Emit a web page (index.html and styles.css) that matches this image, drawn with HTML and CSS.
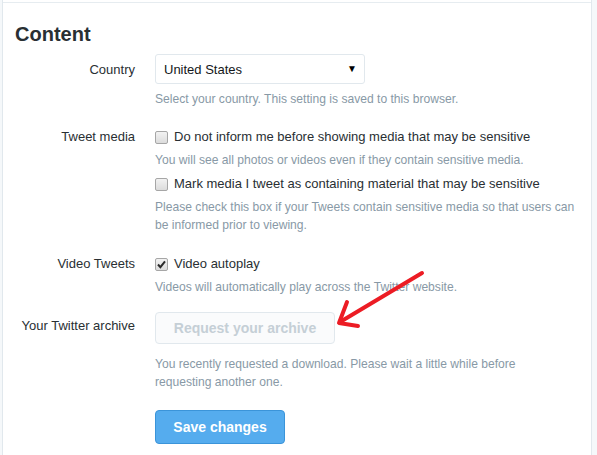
FILE: index.html
```html
<!DOCTYPE html>
<html>
<head>
<meta charset="utf-8">
<link rel="stylesheet" href="styles.css">
</head>
<body>
<div class="card">
  <div class="topline"></div>
  <h2 class="title">Content</h2>
  <div class="form">
    <div class="row row-country">
      <div class="label label-select">Country</div>
      <div class="field">
        <div class="select-wrap">
          <span class="select-text">United States</span>
          <span class="select-arrow">▼</span>
        </div>
        <p class="help help-select">Select your country. This setting is saved to this browser.</p>
      </div>
    </div>
    <div class="row row-media">
      <div class="label">Tweet media</div>
      <div class="field">
        <label class="check"><span class="box"></span>Do not inform me before showing media that may be sensitive</label>
        <p class="help">You will see all photos or videos even if they contain sensitive media.</p>
        <label class="check check-second"><span class="box"></span>Mark media I tweet as containing material that may be sensitive</label>
        <p class="help">Please check this box if your Tweets contain sensitive media so that users can be informed prior to viewing.</p>
      </div>
    </div>
    <div class="row row-video">
      <div class="label">Video Tweets</div>
      <div class="field">
        <label class="check"><span class="box checked"><svg viewBox="0 0 13 13" width="13" height="13"><path d="M3 6.5 L5.4 9.2 L10 3.4" fill="none" stroke="#2a2a2a" stroke-width="2"/></svg></span>Video autoplay</label>
        <p class="help">Videos will automatically play across the Twitter website.</p>
      </div>
    </div>
    <div class="row row-archive">
      <div class="label label-btn">Your Twitter archive</div>
      <div class="field">
        <button class="btn-disabled" type="button">Request your archive</button>
        <p class="help help-archive">You recently requested a download. Please wait a little while before requesting another one.</p>
      </div>
    </div>
    <div class="row row-save">
      <div class="label"></div>
      <div class="field">
        <button class="btn-primary" type="button">Save changes</button>
      </div>
    </div>
  </div>
  <svg class="arrow" viewBox="0 0 597 455" width="597" height="455">
    <path d="M422 273 L340 322" fill="none" stroke="#ec1c24" stroke-width="4" stroke-linecap="round"/>
    <path d="M347 302 L339 323 L358 326" fill="none" stroke="#ec1c24" stroke-width="4" stroke-linecap="round" stroke-linejoin="round"/>
  </svg>
</div>
</body>
</html>
```
FILE: styles.css
```css
html, body {
  margin: 0;
  padding: 0;
}
body {
  background: #f5f8fa;
  font-family: "Liberation Sans", Arial, sans-serif;
  color: #292f33;
  width: 597px;
  height: 455px;
  overflow: hidden;
}
.card {
  position: relative;
  margin-left: 2px;
  width: 588px;
  height: 455px;
  background: #fff;
  border-left: 1px solid #e1e8ed;
  border-right: 1px solid #e1e8ed;
  box-sizing: content-box;
}
.topline {
  height: 2px;
  border-bottom: 1px solid #e6ecf0;
}
.title {
  margin: 19px 0 0 12px;
  font-size: 20px;
  line-height: 24px;
  font-weight: bold;
  color: #292f33;
}
.form {
  margin-top: 8px;
  padding-left: 12px;
}
.row {
  display: grid;
  grid-template-columns: 120px 1fr;
  column-gap: 20px;
}
.label {
  text-align: right;
  font-size: 13px;
  line-height: 18px;
  white-space: nowrap;
}
.label-select {
  padding-top: 7px;
}
.label-btn {
  padding-top: 5px;
}
.field {
  width: 430px;
}
.select-wrap {
  position: relative;
  width: 200px;
  height: 28px;
  border: 1px solid #e1e8ed;
  border-radius: 3px;
  display: flex;
  align-items: center;
  padding-left: 8px;
  box-sizing: content-box;
}
.select-text {
  font-size: 13px;
  color: #14171a;
}
.select-arrow {
  position: absolute;
  right: 7px;
  top: 8px;
  font-size: 10px;
  color: #000;
}
.help {
  margin: 5px 0 0 0;
  font-size: 12.1px;
  line-height: 18px;
  color: #8899a6;
}
.help-select {
  margin-top: 6px;
}
.help-archive {
  margin-top: 11px;
  max-width: 400px;
}
.row-media {
  margin-top: 20px;
}
.row-video {
  margin-top: 21px;
}
.row-archive {
  margin-top: 16px;
}
.row-save {
  margin-top: 19px;
}
.check {
  display: flex;
  align-items: center;
  font-size: 13px;
  line-height: 18px;
  color: #292f33;
}
.check-second {
  margin-top: 6px;
}
.box {
  width: 11px;
  height: 11px;
  border: 1px solid #a6a6a6;
  border-radius: 2px;
  background: linear-gradient(#f2f2f2, #dcdcdc);
  margin-right: 6px;
  flex: none;
  position: relative;
}
.box svg {
  position: absolute;
  left: -1px;
  top: -1px;
}
.btn-disabled {
  display: block;
  width: 180px;
  height: 32px;
  border: 1px solid #e1e8ed;
  border-radius: 4px;
  background: #fafbfc;
  color: #c5cfd6;
  font-family: "Liberation Sans", Arial, sans-serif;
  font-size: 14px;
  font-weight: bold;
  padding: 0;
}
.btn-primary {
  display: block;
  width: 130px;
  height: 34px;
  border: 1px solid #3b94d9;
  border-radius: 4px;
  background: #55acee;
  color: #fff;
  font-family: "Liberation Sans", Arial, sans-serif;
  font-size: 14px;
  font-weight: bold;
  padding: 0;
}
.arrow {
  position: absolute;
  left: -3px;
  top: 0;
  pointer-events: none;
}
```
